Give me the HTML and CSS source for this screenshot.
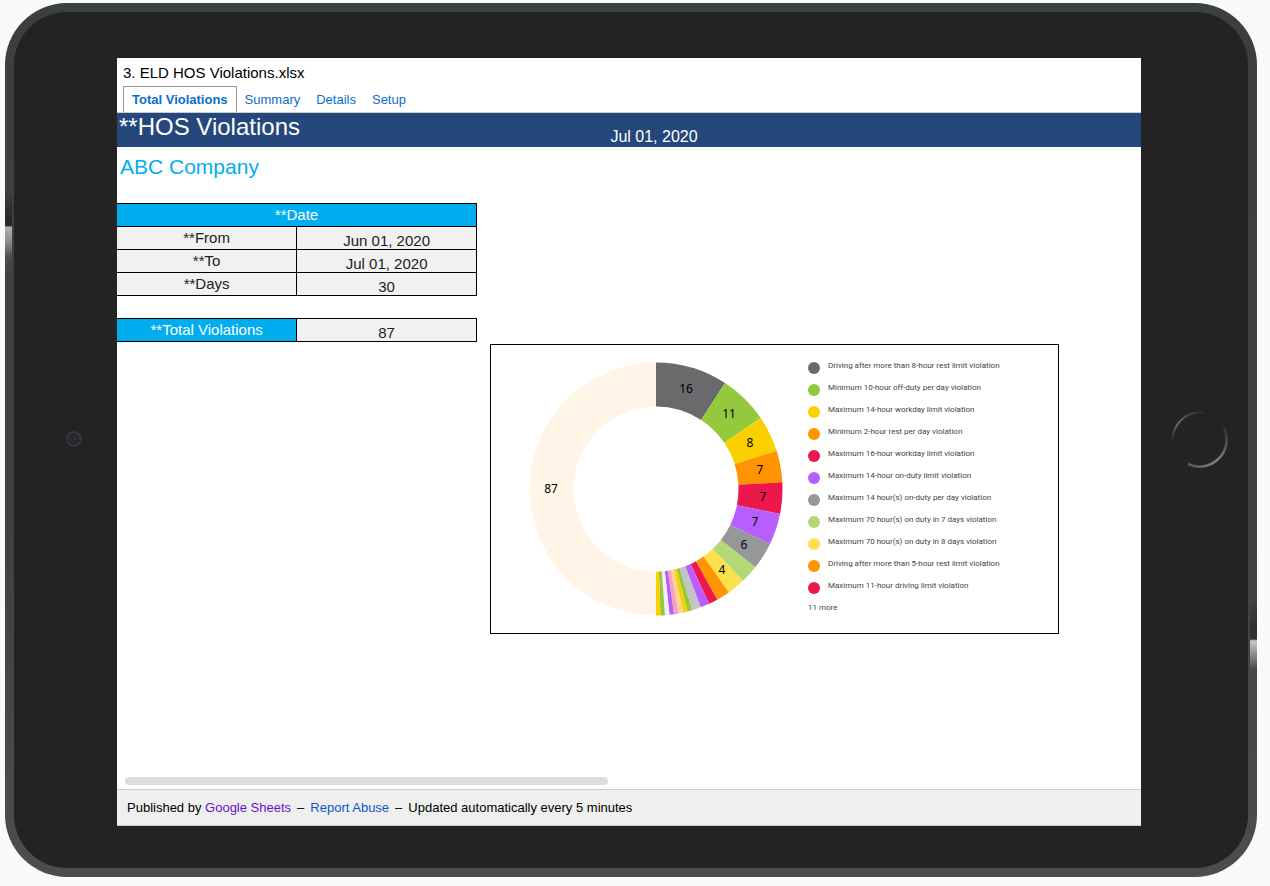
FILE: index.html
```html
<!DOCTYPE html>
<html lang="en">
<head>
<meta charset="utf-8">
<title>3. ELD HOS Violations.xlsx</title>
<link rel="stylesheet" href="styles.css">
</head>
<body>
<div class="tablet">
  <span class="side-key side-key-left"></span>
  <span class="side-key side-key-right"></span>
  <div class="bezel">
    <div class="bezel-side">
      <svg class="camera" width="18" height="18" viewBox="0 0 18 18" aria-hidden="true">
        <circle cx="9" cy="9" r="8" fill="#37353b"/>
        <circle cx="9" cy="9" r="5" fill="#1d1c22" stroke="#2a2930"/>
        <circle cx="9" cy="9" r="3" fill="none" stroke="#3c3b44"/>
        <circle cx="9" cy="9" r="1" fill="#4a4a55"/>
      </svg>
    </div>
    <div class="screen">
      <header class="doc-header">
        <div class="doc-title">3. ELD HOS Violations.xlsx</div>
        <nav class="tabs">
          <a class="tab tab-active" href="#total">Total Violations</a>
          <a class="tab" href="#summary">Summary</a>
          <a class="tab" href="#details">Details</a>
          <a class="tab" href="#setup">Setup</a>
        </nav>
      </header>
      <main class="sheet" id="total">
        <div class="banner">
          <h1 class="banner-title">**HOS Violations</h1>
          <div class="banner-date">Jul 01, 2020</div>
        </div>
        <h2 class="company">ABC Company</h2>
        <table class="grid">
          <tr><th class="head" colspan="2">**Date</th></tr>
          <tr><th class="label">**From</th><td class="value">Jun 01, 2020</td></tr>
          <tr><th class="label">**To</th><td class="value">Jul 01, 2020</td></tr>
          <tr><th class="label">**Days</th><td class="value">30</td></tr>
        </table>
        <table class="grid">
          <tr><th class="head">**Total Violations</th><td class="value">87</td></tr>
        </table>
        <section class="chart">
          <svg class="donut" width="254" height="254" viewBox="-127 -127 254 254" role="img" aria-label="Violations by type">
            <g class="ring" transform="rotate(-90)">
              <circle pathLength="174" r="104.5" stroke="#fff4e6" stroke-dasharray="87 87" stroke-dashoffset="-87"/>
              <circle pathLength="174" r="104.5" stroke="#696a6c" stroke-dasharray="16 158"/>
              <circle pathLength="174" r="104.5" stroke="#94c93d" stroke-dasharray="11 163" stroke-dashoffset="-16"/>
              <circle pathLength="174" r="104.5" stroke="#fad000" stroke-dasharray="8 166" stroke-dashoffset="-27"/>
              <circle pathLength="174" r="104.5" stroke="#ff9400" stroke-dasharray="7 167" stroke-dashoffset="-35"/>
              <circle pathLength="174" r="104.5" stroke="#ec174c" stroke-dasharray="7 167" stroke-dashoffset="-42"/>
              <circle pathLength="174" r="104.5" stroke="#b85eff" stroke-dasharray="7 167" stroke-dashoffset="-49"/>
              <circle pathLength="174" r="104.5" stroke="#969798" stroke-dasharray="6 168" stroke-dashoffset="-56"/>
              <circle pathLength="174" r="104.5" stroke="#b3d977" stroke-dasharray="4 170" stroke-dashoffset="-62"/>
              <circle pathLength="174" r="104.5" stroke="#fde04d" stroke-dasharray="4 170" stroke-dashoffset="-66"/>
              <circle pathLength="174" r="104.5" stroke="#ff9400" stroke-dasharray="3 171" stroke-dashoffset="-70"/>
              <circle pathLength="174" r="104.5" stroke="#ec174c" stroke-dasharray="2 172" stroke-dashoffset="-73"/>
              <circle pathLength="174" r="104.5" stroke="#b85eff" stroke-dasharray="2 172" stroke-dashoffset="-75"/>
              <circle pathLength="174" r="104.5" stroke="#c3c3c4" stroke-dasharray="2 172" stroke-dashoffset="-77"/>
              <circle pathLength="174" r="104.5" stroke="#94c93d" stroke-dasharray="1 173" stroke-dashoffset="-79"/>
              <circle pathLength="174" r="104.5" stroke="#fad000" stroke-dasharray="1 173" stroke-dashoffset="-80"/>
              <circle pathLength="174" r="104.5" stroke="#ffd499" stroke-dasharray="1 173" stroke-dashoffset="-81"/>
              <circle pathLength="174" r="104.5" stroke="#f7a2b7" stroke-dasharray="1 173" stroke-dashoffset="-82"/>
              <circle pathLength="174" r="104.5" stroke="#b85eff" stroke-dasharray="1 173" stroke-dashoffset="-83"/>
              <circle pathLength="174" r="104.5" stroke="#f0f0f0" stroke-dasharray="1 173" stroke-dashoffset="-84"/>
              <circle pathLength="174" r="104.5" stroke="#94c93d" stroke-dasharray="1 173" stroke-dashoffset="-85"/>
              <circle pathLength="174" r="104.5" stroke="#fad000" stroke-dasharray="1 173" stroke-dashoffset="-86"/>
            </g>
            <g class="counts">
              <text x="30" y="-96">16</text>
              <text x="73" y="-71">11</text>
              <text x="94" y="-42">8</text>
              <text x="104" y="-15">7</text>
              <text x="107" y="12">7</text>
              <text x="99" y="37">7</text>
              <text x="88" y="60">6</text>
              <text x="66" y="85">4</text>
              <text x="-105" y="4">87</text>
            </g>
          </svg>
          <ul class="legend">
            <li><i class="dot gray"></i>Driving after more than 8-hour rest limit violation</li>
            <li><i class="dot green"></i>Minimum 10-hour off-duty per day violation</li>
            <li><i class="dot yellow"></i>Maximum 14-hour workday limit violation</li>
            <li><i class="dot orange"></i>Minimum 2-hour rest per day violation</li>
            <li><i class="dot red"></i>Maximum 16-hour workday limit violation</li>
            <li><i class="dot purple"></i>Maximum 14-hour on-duty limit violation</li>
            <li><i class="dot gray-light"></i>Maximum 14 hour(s) on-duty per day violation</li>
            <li><i class="dot green-light"></i>Maximum 70 hour(s) on duty in 7 days violation</li>
            <li><i class="dot yellow-light"></i>Maximum 70 hour(s) on duty in 8 days violation</li>
            <li><i class="dot orange"></i>Driving after more than 5-hour rest limit violation</li>
            <li><i class="dot red"></i>Maximum 11-hour driving limit violation</li>
            <li>11 more</li>
          </ul>
        </section>
        <div class="scroll-track"><div class="scroll-thumb"></div></div>
      </main>
      <footer class="footer">
        <span>Published by <a class="visited" href="#sheets">Google Sheets</a></span>
        <span>–</span>
        <a class="report" href="#report">Report Abuse</a>
        <span>–</span>
        <span>Updated automatically every 5 minutes</span>
      </footer>
    </div>
    <div class="bezel-side">
      <svg class="home" width="58" height="58" viewBox="0 0 58 58" aria-hidden="true">
        <defs>
          <linearGradient id="arcTop" x1="0" y1="1" x2="1" y2="0">
            <stop offset="0" stop-color="#242424"/><stop offset=".4" stop-color="#6a6a6a"/><stop offset="1" stop-color="#2a2a2a"/>
          </linearGradient>
          <linearGradient id="arcBottom" x1="0" y1="1" x2="1" y2="0">
            <stop offset="0" stop-color="#555"/><stop offset=".45" stop-color="#858585"/><stop offset="1" stop-color="#333"/>
          </linearGradient>
        </defs>
        <path d="M3 33A27 27 0 0 1 34 3" fill="none" stroke="url(#arcTop)" stroke-width="2"/>
        <path d="M54 18A27 27 0 0 1 18 54" fill="none" stroke="url(#arcBottom)" stroke-width="2.5"/>
      </svg>
    </div>
  </div>
</div>
</body>
</html>
```
FILE: styles.css
```css
* { box-sizing: border-box; }

body {
  margin: 0;
  min-height: 100vh;
  display: flex;
  padding: 3px 13px 9px 5px;
  background: #fafafa;
  font-family: "Liberation Sans", Arial, sans-serif;
  color: #000;
}

a { text-decoration: none; }

.tablet {
  position: relative;
  flex: 1;
  display: flex;
  padding: 9px;
  border-radius: 62px;
  background:
    linear-gradient(#3a4140, #3a4140) top / 100% 9px no-repeat,
    linear-gradient(#3e3e3e 0%, #404040 60%, #4d4d4d 100%);
}

.side-key {
  position: absolute;
  width: 7px;
}

.side-key-left {
  left: 0;
  top: 190px;
  height: 90px;
  background: linear-gradient(#3e3e3e, #222829 30%, #262a2b 36%, #b0b0b0 38%, #8a8a8a 55%, #4a4a4a 72%, #3e3e3e);
}

.side-key-right {
  right: 0;
  top: 600px;
  height: 90px;
  background: linear-gradient(#404040, #2a2e2f 30%, #303435 40%, #c8c8c8 42%, #808080 60%, #474747 74%, #464646);
}

.bezel {
  flex: 1;
  display: grid;
  grid-template-columns: 103px minmax(0, 1fr) 107px;
  padding: 46px 0 42px;
  border-radius: 53px;
  background: #232323;
}

.bezel-side {
  display: flex;
  align-items: center;
  justify-content: center;
  padding-bottom: 6px;
}

.camera { margin-left: 16px; }
.home { margin-left: 8px; }

.screen {
  display: flex;
  flex-direction: column;
  background: #fff;
}

.doc-header {
  padding: 6px 6px 0;
  border-bottom: 1px solid #ccc;
}

.doc-title {
  font-size: 15px;
  line-height: 18px;
}

.tabs {
  display: flex;
  margin-top: 4px;
  font-size: 13px;
  line-height: 25px;
}

.tab {
  border: 1px solid transparent;
  border-bottom: 0;
  padding: 0 7px;
  color: #0a6ecd;
}

.tab-active {
  border-color: #999;
  padding: 0 8px;
  font-weight: bold;
}

.sheet {
  flex: 1;
  display: flex;
  flex-direction: column;
}

.banner {
  display: flex;
  height: 34px;
  background: #25477b;
  color: #fff;
}

.banner-title {
  width: 360px;
  margin: 0;
  padding-left: 2px;
  font-size: 24px;
  font-weight: normal;
  line-height: 28px;
}

.banner-date {
  align-self: flex-end;
  width: 354px;
  font-size: 16px;
  line-height: 20px;
  text-align: center;
}

.company {
  margin: 0;
  padding-left: 3px;
  font-size: 21px;
  font-weight: normal;
  line-height: 40px;
  color: #00adef;
}

.grid {
  width: 360px;
  border-collapse: collapse;
  table-layout: fixed;
  font-size: 15px;
  line-height: 17px;
  text-align: center;
}

.company + .grid { margin-top: 16px; }
.grid + .grid { margin-top: 22px; }

.grid th,
.grid td {
  height: 23px;
  border: 1px solid #000;
  padding: 0;
  font-weight: normal;
}

.grid th:first-child { border-left: 0; }

.grid .head {
  background: #00adef;
  color: #fff;
  vertical-align: top;
  padding-top: 2px;
}

.grid .label {
  background: #f1f1f1;
  color: #222;
  vertical-align: top;
  padding-top: 2px;
}

.grid .value {
  background: #f1f1f1;
  color: #222;
  vertical-align: bottom;
}

.chart {
  display: flex;
  gap: 25px;
  width: 569px;
  height: 290px;
  margin: 2px 0 0 373px;
  padding: 10px 38px;
  border: 1px solid #000;
}

.donut { margin-top: 7px; }

.ring circle {
  fill: none;
  stroke-width: 44;
}

.counts {
  font-family: "Noto Sans", sans-serif;
  font-size: 12px;
  text-anchor: middle;
}

.legend {
  margin: 0;
  padding: 0;
  list-style: none;
  font-family: Roboto, sans-serif;
  font-size: 8px;
  line-height: 22px;
  white-space: nowrap;
  color: #444;
}

.legend li {
  display: flex;
  gap: 8px;
  height: 22px;
}

.dot {
  width: 12px;
  height: 12px;
  margin-top: 7px;
  border-radius: 50%;
}

.gray { background: #696a6c; }
.green { background: #94c93d; }
.yellow { background: #fad000; }
.orange { background: #ff9400; }
.red { background: #ec174c; }
.purple { background: #b85eff; }
.gray-light { background: #969798; }
.green-light { background: #b3d977; }
.yellow-light { background: #fde04d; }

.scroll-track {
  margin-top: auto;
  padding: 0 8px 4px;
}

.scroll-thumb {
  width: 483px;
  height: 8px;
  border-radius: 4px;
  background: #dadce0;
}

.footer {
  display: flex;
  gap: 6px;
  padding: 0 10px;
  border-top: 1px solid #ccc;
  border-bottom: 1px solid #ccc;
  background: #efefef;
  font-size: 13px;
  line-height: 35px;
}

.visited { color: #6611cc; }
.report { color: #1155cc; }
```
